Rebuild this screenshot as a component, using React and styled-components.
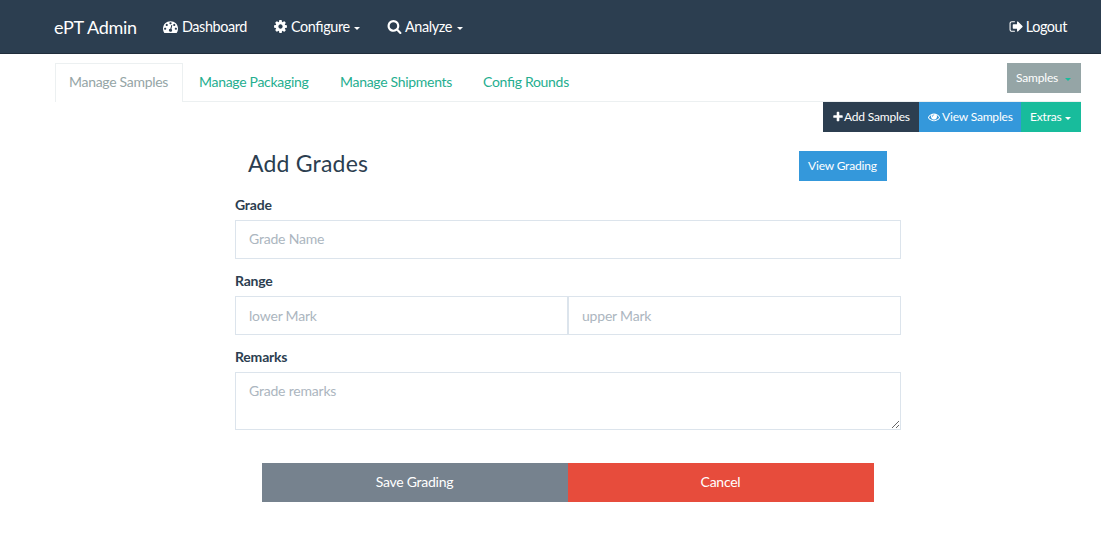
import React from "react";
import styled, { createGlobalStyle } from "styled-components";

const GlobalStyle = createGlobalStyle`
  *, *::before, *::after { box-sizing: border-box; }
  body {
    margin: 0;
    background: #fff;
    color: #2c3e50;
    font-family: Lato, "Liberation Sans", sans-serif;
    font-size: 14px;
    line-height: 20px;
    letter-spacing: -0.2px;
    font-feature-settings: "liga" 1;
  }
  button, input, textarea {
    font: inherit;
    letter-spacing: inherit;
    font-feature-settings: inherit;
    border-radius: 0;
    margin: 0;
  }
`;

const Svg = styled.svg`
  display: block;
  flex: none;
  width: ${(p) => p.$size}px;
  height: ${(p) => p.$size}px;
  fill: currentColor;
`;

const paths = {
  dashboard:
    "M384 1152q0-53-37.5-90.5t-90.5-37.5-90.5 37.5-37.5 90.5 37.5 90.5 90.5 37.5 90.5-37.5 37.5-90.5zm192-448q0-53-37.5-90.5t-90.5-37.5-90.5 37.5-37.5 90.5 37.5 90.5 90.5 37.5 90.5-37.5 37.5-90.5zm428 481l101-382q6-26-7.5-48.5t-38.5-29.5-48 6.5-30 39.5l-101 382q-60 5-107 43.5t-63 98.5q-20 77 20 146t117 89 146-20 89-117q16-60-6-117t-72-91zm660-33q0-53-37.5-90.5t-90.5-37.5-90.5 37.5-37.5 90.5 37.5 90.5 90.5 37.5 90.5-37.5 37.5-90.5zm-640-640q0-53-37.5-90.5t-90.5-37.5-90.5 37.5-37.5 90.5 37.5 90.5 90.5 37.5 90.5-37.5 37.5-90.5zm448 192q0-53-37.5-90.5t-90.5-37.5-90.5 37.5-37.5 90.5 37.5 90.5 90.5 37.5 90.5-37.5 37.5-90.5zm320 448q0 261-141 483-19 29-54 29h-1402q-35 0-54-29-141-221-141-483 0-182 71-348t191-286 286-191 348-71 348 71 286 191 191 286 71 348z",
  cog: "M1152 896q0-106-75-181t-181-75-181 75-75 181 75 181 181 75 181-75 75-181zm512-109v222q0 12-8 23t-20 13l-185 28q-19 54-39 91 35 50 107 138 10 12 10 25t-9 23q-27 37-99 108t-94 71q-12 0-26-9l-138-108q-44 23-91 38-16 136-29 186-7 28-36 28h-222q-14 0-24.5-8.5t-11.5-21.5l-28-184q-49-16-90-37l-141 107q-10 9-25 9-14 0-25-11-126-114-165-168-7-10-7-23 0-12 8-23 15-21 51-66.5t54-70.5q-27-50-41-99l-183-27q-13-2-21-12.5t-8-23.5v-222q0-12 8-23t19-13l186-28q14-46 39-92-40-57-107-138-10-12-10-24 0-10 9-23 26-36 98.5-107.5t94.5-71.5q13 0 26 10l138 107q44-23 91-38 16-136 29-186 7-28 36-28h222q14 0 24.5 8.5t11.5 21.5l28 184q49 16 90 37l142-107q9-9 24-9 13 0 25 10 129 119 165 170 7 8 7 22 0 12-8 23-15 21-51 66.5t-54 70.5q26 50 41 98l183 28q13 2 21 12.5t8 23.5z",
  search:
    "M1216 832q0-185-131.5-316.5t-316.5-131.5-316.5 131.5-131.5 316.5 131.5 316.5 316.5 131.5 316.5-131.5 131.5-316.5zm512 832q0 52-38 90t-90 38q-54 0-90-38l-343-342q-179 124-399 124-143 0-273.5-55.5t-225-150-150-225-55.5-273.5 55.5-273.5 150-225 225-150 273.5-55.5 273.5 55.5 225 150 150 225 55.5 273.5q0 220-124 399l343 343q37 37 37 90z",
  plus: "M1600 736v192q0 40-28 68t-68 28h-416v416q0 40-28 68t-68 28h-192q-40 0-68-28t-28-68v-416h-416q-40 0-68-28t-28-68v-192q0-40 28-68t68-28h416v-416q0-40 28-68t68-28h192q40 0 68 28t28 68v416h416q40 0 68 28t28 68z",
  eye: "M1664 960q-152-236-381-353 61 104 61 225 0 185-131.5 316.5t-316.5 131.5-316.5-131.5-131.5-316.5q0-121 61-225-229 117-381 353 133 205 333.5 326.5t434.5 121.5 434.5-121.5 333.5-326.5zm-720-384q0-20-14-34t-34-14q-125 0-214.5 89.5t-89.5 214.5q0 20 14 34t34 14 34-14 14-34q0-86 61-147t147-61q20 0 34-14t14-34zm848 384q0 34-20 69-140 230-376.5 368.5t-499.5 138.5-499.5-139-376.5-368q-20-35-20-69t20-69q140-229 376.5-368t499.5-139 499.5 139 376.5 368q20 35 20 69z",
  signOut:
    "M704 1440q0 4 1 20t.5 26.5-3 23.5-10 19.5-20.5 6.5h-320q-119 0-203.5-84.5t-84.5-203.5v-704q0-119 84.5-203.5t203.5-84.5h320q13 0 22.5 9.5t9.5 22.5q0 4 1 20t.5 26.5-3 23.5-10 19.5-20.5 6.5h-320q-66 0-113 47t-47 113v704q0 66 47 113t113 47h312l11.5 1 11.5 3 8 5.5 7 9 2 13.5zm928-544q0 26-19 45l-544 544q-19 19-45 19t-45-19-19-45v-288h-448q-26 0-45-19t-19-45v-384q0-26 19-45t45-19h448v-288q0-26 19-45t45-19 45 19l544 544q19 19 19 45z",
};

const Icon = ({ name, size = 15 }) => (
  <Svg $size={size} viewBox="0 0 1792 1792" aria-hidden="true">
    <path d={paths[name]} />
  </Svg>
);

const Caret = styled.span`
  width: 0;
  height: 0;
  margin-left: ${(p) => p.$gap ?? 4}px;
  margin-top: 3px;
  border: 3px solid transparent;
  border-top-color: ${(p) => p.$color || "currentColor"};
  border-bottom: 0;
`;

const Navbar = styled.nav`
  display: flex;
  align-items: center;
  height: 54px;
  padding: 0 34px 0 54px;
  background: #2c3e50;
  border-bottom: 1px solid #202d3b;
  color: #fff;
`;

const Brand = styled.a`
  width: 109px;
  font-size: 18px;
  letter-spacing: -0.3px;
`;

const NavLink = styled.a`
  display: flex;
  align-items: center;
  gap: ${(p) => p.$gap ?? 4}px;
  width: ${(p) => (p.$width ? p.$width + "px" : "auto")};
  margin-left: ${(p) => (p.$end ? "auto" : "0")};
  font-size: 14.4px;
  letter-spacing: -0.4px;
  white-space: nowrap;
`;

const TabBar = styled.div`
  display: flex;
  height: 39px;
  margin: 9px 20px 0 55px;
  border-bottom: 1px solid #ecf0f1;
`;

const Tab = styled.a`
  height: 39px;
  width: ${(p) => p.$width}px;
  padding: ${(p) => (p.$active ? 8 : 9)}px 0 0 ${(p) => (p.$active ? 13 : 16)}px;
  letter-spacing: -0.3px;
  white-space: nowrap;
  color: ${(p) => (p.$active ? "#95a5a6" : "#25ae8f")};
  background: ${(p) => (p.$active ? "#fff" : "transparent")};
  border: ${(p) => (p.$active ? "1px solid #ecf0f1" : "0")};
  border-bottom: 0;
`;

const palette = {
  gray: "#95a5a6",
  dark: "#2c3e50",
  blue: "#3498db",
  green: "#18bc9c",
};

const SmallButton = styled.button`
  display: flex;
  align-items: center;
  height: 30px;
  width: ${(p) => p.$width}px;
  padding: 0 0 0 9px;
  border: 0;
  gap: ${(p) => p.$gap ?? 0}px;
  font-size: 12px;
  letter-spacing: -0.18px;
  white-space: nowrap;
  color: #fff;
  background: ${(p) => palette[p.$tone]};
`;

const TabBarEnd = styled.div`
  margin-left: auto;
`;

const Actions = styled.div`
  display: flex;
  justify-content: flex-end;
  padding-right: 20px;
`;

const Form = styled.form`
  width: 666px;
  margin: 19px 0 0 235px;
`;

const FormHeader = styled.header`
  display: flex;
  justify-content: space-between;
  height: 44px;
  padding: 0 14px 0 13px;
`;

const Title = styled.h1`
  margin: 0;
  font-size: 23px;
  font-weight: 400;
  line-height: 24px;
  letter-spacing: 0.2px;
`;

const Field = styled.div`
  margin-bottom: 12px;
`;

const Label = styled.label`
  display: block;
  height: 25px;
  font-weight: 700;
  letter-spacing: -0.2px;
`;

const InputRow = styled.div`
  display: flex;
`;

const Input = styled.input`
  display: block;
  flex: 1;
  min-width: 0;
  width: 100%;
  height: 39px;
  padding: 0 13px ${(p) => (p.$half ? 0 : 2)}px;
  border: 1px solid #dce4ec;
  color: #2c3e50;
  background: #fff;
  outline: 0;
  &::placeholder { color: #acb6c0; opacity: 1; }
`;

const TextArea = styled(Input)`
  height: 58px;
  padding: 8px 13px;
  resize: vertical;
`;

const Buttons = styled.div`
  display: flex;
  padding: 21px 27px 0;
`;

const WideButton = styled.button`
  flex: 1;
  height: 39px;
  padding: 0 1px 2px 0;
  border: 0;
  letter-spacing: -0.25px;
  color: #fff;
  background: ${(p) => p.$bg};
`;

export default function App() {
  return (
    <>
      <GlobalStyle />
      <Navbar>
        <Brand>ePT Admin</Brand>
        <NavLink $width={110}><Icon name="dashboard" />Dashboard</NavLink>
        <NavLink $width={114} $gap={3}><Icon name="cog" />Configure<Caret $gap={1} /></NavLink>
        <NavLink $gap={3}><Icon name="search" />Analyze<Caret $gap={2} /></NavLink>
        <NavLink $end $gap={2}><Icon name="signOut" />Logout</NavLink>
      </Navbar>
      <TabBar>
        <Tab $active $width={128}>Manage Samples</Tab>
        <Tab $width={141}>Manage Packaging</Tab>
        <Tab $width={143}>Manage Shipments</Tab>
        <Tab $width={120}>Config Rounds</Tab>
        <TabBarEnd>
          <SmallButton $tone="gray" $width={74}>Samples<Caret $gap={7} $color="#18bc9c" /></SmallButton>
        </TabBarEnd>
      </TabBar>
      <Actions>
        <SmallButton $tone="dark" $width={96}><Icon name="plus" size={12} />Add Samples</SmallButton>
        <SmallButton $tone="blue" $width={102} $gap={2}><Icon name="eye" size={12} />View Samples</SmallButton>
        <SmallButton $tone="green" $width={60}>Extras<Caret $gap={3} /></SmallButton>
      </Actions>
      <Form onSubmit={(e) => e.preventDefault()}>
        <FormHeader>
          <Title>Add Grades</Title>
          <SmallButton type="button" $tone="blue" $width={88}>View Grading</SmallButton>
        </FormHeader>
        <Field>
          <Label htmlFor="grade">Grade</Label>
          <Input id="grade" placeholder="Grade Name" />
        </Field>
        <Field>
          <Label htmlFor="lower">Range</Label>
          <InputRow>
            <Input $half id="lower" placeholder="lower Mark" />
            <Input $half placeholder="upper Mark" />
          </InputRow>
        </Field>
        <Field>
          <Label htmlFor="remarks">Remarks</Label>
          <TextArea as="textarea" id="remarks" placeholder="Grade remarks" />
        </Field>
        <Buttons>
          <WideButton $bg="#76828e">Save Grading</WideButton>
          <WideButton type="button" $bg="#e74c3c">Cancel</WideButton>
        </Buttons>
      </Form>
    </>
  );
}
